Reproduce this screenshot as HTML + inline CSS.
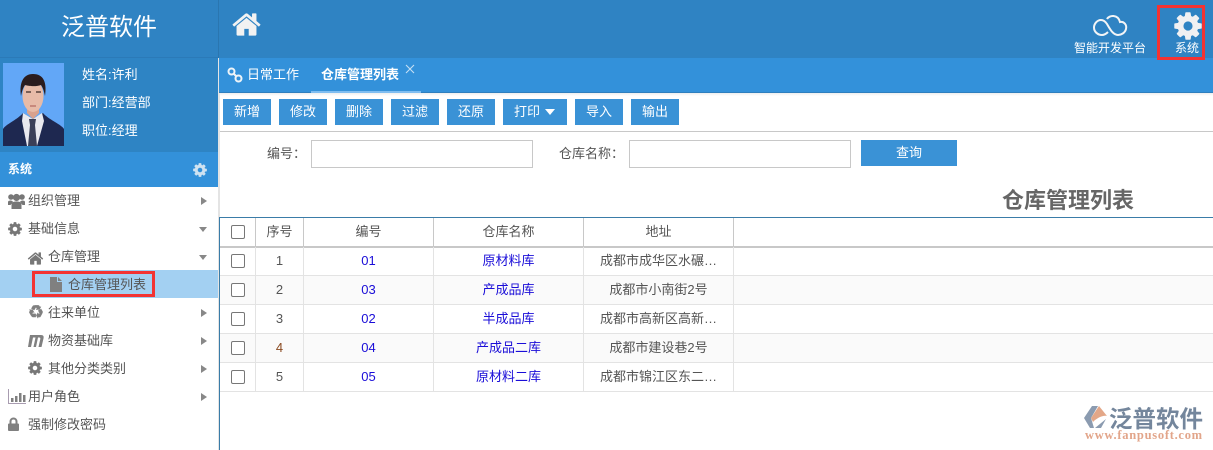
<!DOCTYPE html>
<html><head><meta charset="utf-8"><style>
*{box-sizing:border-box;margin:0;padding:0}
html,body{width:1213px;height:450px;overflow:hidden;background:#fff;font-family:"Liberation Sans","Noto Sans CJK SC",sans-serif;font-size:13px;color:#555}
.a{position:absolute;white-space:nowrap}
.btn{position:absolute;top:99px;height:26px;background:#3a92d6;color:#fff;text-align:center;line-height:25px;font-size:13px}
.m{position:absolute;white-space:nowrap;line-height:28px;height:28px;font-size:13px;color:#555}
.tri-r{position:absolute;width:0;height:0;border-left:6px solid #888;border-top:4px solid transparent;border-bottom:4px solid transparent;left:201px}
.tri-d{position:absolute;width:0;height:0;border-top:5px solid #888;border-left:4px solid transparent;border-right:4px solid transparent;left:199px}
svg{position:absolute;display:block}
.h{position:absolute;top:218px;height:28px;line-height:27px;text-align:center;font-size:13px;color:#555}
.c{position:absolute;height:28px;line-height:28px;text-align:center;font-size:13px;color:#555}
.l{color:#1a0dd8}
.v{position:absolute;width:1px}
.hl{position:absolute;left:220px;width:993px;height:1px;background:#e3e3e3}
.cb{position:absolute;left:231px;width:14px;height:14px;border:1px solid #777;border-radius:2px;background:#fff}
input{position:absolute;border:1px solid #c8c8c8;background:#fff}
</style></head><body>
<svg width="0" height="0"><defs>
<path id="gear" d="M1152 896q0-106-75-181t-181-75-181 75-75 181 75 181 181 75 181-75 75-181zm512-109v222q0 12-8 23t-20 13l-185 28q-19 54-39 91 35 50 107 138 10 12 10 25t-9 23q-27 37-99 108t-94 71q-12 0-26-9l-138-108q-44 23-91 38-16 136-29 186-7 28-36 28h-222q-14 0-24.5-8.5t-11.5-21.5l-28-184q-49-16-90-37l-141 107q-10 9-25 9-14 0-25-11-126-114-165-168-7-10-7-23 0-12 8-23 15-21 51-66.5t54-70.5q-27-50-41-99l-183-27q-13-2-21-12.5t-8-23.5v-222q0-12 8-23t19-13l186-28q14-46 39-92-40-57-107-138-10-12-10-24 0-10 9-23 26-36 98.5-107.5t94.5-71.5q13 0 26 10l138 107q44-23 91-38 16-136 29-186 7-28 36-28h222q14 0 24.5 8.5t11.5 21.5l28 184q49 16 90 37l142-107q9-9 24-9 13 0 25 10 129 119 165 170 7 8 7 22 0 12-8 23-15 21-51 66.5t-54 70.5q26 50 41 98l183 28q13 2 21 12.5t8 23.5z"/>
<path id="home" d="M1472 992v480q0 26-19 45t-45 19h-384v-384h-256v384h-384q-26 0-45-19t-19-45v-480q0-1 .5-3t.5-3l575-474 575 474q1 2 1 6zm223-69l-62 74q-8 9-21 11h-3q-13 0-21-7l-692-577-692 577q-12 8-24 7-13-2-21-11l-62-74q-8-10-7-23.5t11-21.5l719-599q32-26 76-26t76 26l244 204v-195q0-14 9-23t23-9h192q14 0 23 9t9 23v408l219 182q10 8 11 21.5t-7 23.5z"/>
</defs></svg>

<!-- header -->
<div class="a" style="left:0;top:0;width:1213px;height:58px;background:#2f83c3"></div>
<div class="a" style="left:218px;top:0;width:1px;height:58px;background:#2a76b0"></div>
<div class="a" style="left:0;top:57px;width:218px;height:1px;background:#2b7ab8"></div>
<svg style="left:231px;top:9px" width="31" height="31" viewBox="0 0 1792 1792" fill="#f2f2f2"><use href="#home"/></svg>
<div class="a" style="left:0;top:10px;width:218px;text-align:center;color:#fff;font-size:24px;line-height:36px">泛普软件</div>

<!-- sidebar top -->
<div class="a" style="left:0;top:58px;width:218px;height:94px;background:#2e84c4"></div>
<svg style="left:3px;top:63px" width="61" height="83" viewBox="0 0 61 83">
<rect width="61" height="83" fill="#62a7f7"/>
<path d="M0 83V66C3 61 14 57 20 50L30 56L40 50C46 57 58 61 61 66V83Z" fill="#1e2850"/>
<path d="M20 50L30 56L39 50L41 58L34 83H24L19 58Z" fill="#e9e9ef"/>
<path d="M26 56H33L32 62L34 83H25L27 62Z" fill="#3a3f58"/>
<path d="M24 42H36V50L30 56L24 50Z" fill="#d9a28e"/>
<ellipse cx="30" cy="33" rx="10.500" ry="16" fill="#e7bba8"/>
<path d="M18 33C16 20 20 11 30 11C41 11 44 20 42 33C41 28 40 25 38 22C33 24 25 23 22 22C20 25 19 28 18 33Z" fill="#2a1c1e"/>
<path d="M23 29h5M33 29h5" stroke="#3a2826" stroke-width="1.200"/>
<path d="M27 43h6" stroke="#b4685e" stroke-width="1.200"/>
</svg>
<div class="a" style="left:82px;top:66px;color:#fff;line-height:18px;font-size:13px">姓名:许利</div>
<div class="a" style="left:82px;top:94px;color:#fff;line-height:18px;font-size:13px">部门:经营部</div>
<div class="a" style="left:82px;top:122px;color:#fff;line-height:18px;font-size:13px">职位:经理</div>

<div class="a" style="left:0;top:152px;width:218px;height:35px;background:#3391da"></div>
<div class="a" style="left:8px;top:160px;color:#fff;font-weight:bold;font-size:12px;line-height:18px">系统</div>
<svg style="left:192px;top:162px" width="16" height="16" viewBox="0 0 1792 1792" fill="#cfe2f1"><use href="#gear"/></svg>

<!-- sidebar menu -->
<div class="a" style="left:0;top:270px;width:218px;height:28px;background:#a3d0f2"></div>
<div class="a" style="left:218px;top:58px;width:2px;height:392px;background:#e4e4e4"></div>

<svg style="left:8px;top:193px" width="17" height="16" viewBox="0 0 17 16" fill="#777"><circle cx="8.500" cy="4.500" r="3.600"/><circle cx="3" cy="4" r="2.800"/><circle cx="14" cy="4" r="2.800"/><path d="M3.500 16V11C3.500 9 6 8.500 8.500 8.500S13.500 9 13.500 11V16ZM0 12V9C0 8 1 7.500 3 7.500L5 8.500L2.500 12ZM17 12V9C17 8 16 7.500 14 7.500L12 8.500L14.500 12Z"/></svg>
<div class="m" style="left:28px;top:187px">组织管理</div><div class="tri-r" style="top:197px"></div>
<svg style="left:7px;top:221px" width="16" height="16" viewBox="0 0 1792 1792" fill="#777"><use href="#gear"/></svg>
<div class="m" style="left:28px;top:215px">基础信息</div><div class="tri-d" style="top:227px"></div>
<svg style="left:27px;top:250px" width="17" height="17" viewBox="0 0 1792 1792" fill="#777"><use href="#home"/></svg>
<div class="m" style="left:48px;top:243px">仓库管理</div><div class="tri-d" style="top:255px"></div>
<svg style="left:50px;top:277px" width="12" height="15" viewBox="0 0 12 15" fill="#808080"><path d="M0 0H7V5H12V15H0ZM8 0L12 4H8Z"/></svg>
<div class="m" style="left:68px;top:271px">仓库管理列表</div>
<div class="a" style="left:32px;top:271px;width:123px;height:26px;border:3px solid #f33333"></div>
<div class="a" style="left:28px;top:302px;font:18px/22px 'DejaVu Sans',sans-serif;color:#808080;-webkit-text-stroke:.6px #808080">♻</div>
<div class="m" style="left:48px;top:299px">往来单位</div><div class="tri-r" style="top:309px"></div>
<svg style="left:28px;top:335px" width="16" height="12" viewBox="0 0 16 12" fill="#808080"><path d="M2 0H13C15.500 0 16 1.500 15.500 3.500L13.500 12H10.500L12.300 4C12.500 3 12 2.500 11.300 2.500H10L8 12H5.500L7.500 2.500H5L3 12H0Z"/></svg>
<div class="m" style="left:48px;top:327px">物资基础库</div><div class="tri-r" style="top:337px"></div>
<svg style="left:27px;top:360px" width="16" height="16" viewBox="0 0 1792 1792" fill="#777"><use href="#gear"/></svg>
<div class="m" style="left:48px;top:355px">其他分类类别</div><div class="tri-r" style="top:365px"></div>
<svg style="left:8px;top:389px" width="18" height="15" viewBox="0 0 18 15"><path d="M.5 0V14.500H18" stroke="#a89cb0" fill="none"/><path d="M3 9h2.500v4H3zM7 7h2.500v6H7zM11 4h2.500v9H11zM15 6h2.500v7H15z" fill="#808080"/></svg>
<div class="m" style="left:28px;top:383px">用户角色</div><div class="tri-r" style="top:393px"></div>
<svg style="left:8px;top:417px" width="11" height="14" viewBox="0 0 11 14" fill="#808080"><path d="M1.500 7V4.500a4 4 0 0 1 8 0V7H7.500V4.500a2 2 0 0 0-4 0V7ZM1 6.500H10a1 1 0 0 1 1 1V13a1 1 0 0 1-1 1H1a1 1 0 0 1-1-1V7.500a1 1 0 0 1 1-1Z"/></svg>
<div class="m" style="left:28px;top:411px">强制修改密码</div>

<!-- tabs -->
<div class="a" style="left:219px;top:58px;width:994px;height:34px;background:#3391da"></div>
<div class="a" style="left:219px;top:92px;width:994px;height:1px;background:#2f7fbe"></div>
<div class="a" style="left:220px;top:93px;width:993px;height:3px;background:linear-gradient(#eee,#fff)"></div>
<svg style="left:227px;top:67px" width="16" height="16" viewBox="0 0 16 16" fill="none" stroke="#eef4f8" stroke-width="2"><circle cx="4.500" cy="4.500" r="3"/><circle cx="11.500" cy="11.500" r="3"/><path d="M6.500 6.500L9.500 9.500"/></svg>
<div class="a" style="left:247px;top:66px;color:#fff;font-size:13px;line-height:18px">日常工作</div>
<div class="a" style="left:321px;top:66px;color:#fff;font-size:13px;font-weight:bold;line-height:18px">仓库管理列表</div>
<svg style="left:405px;top:64px" width="10" height="10" viewBox="0 0 10 10" stroke="#c4dff3" stroke-width="1.100"><path d="M1 1L9 9M9 1L1 9"/></svg>
<div class="a" style="left:311px;top:91px;width:110px;height:2px;background:#7fbdf0"></div>

<!-- header right (above tab bar) -->
<svg style="left:1090px;top:10px" width="40" height="30" viewBox="0 0 40 30" fill="none" stroke="#f2f4f6" stroke-width="2"><path d="M17 9C19 5 28 4 30 12C34 11 37 15 36 19C35 23 31 25 28 25C23 25 20 19 17 14C15 11 13 10 11 10C7 10 4 14 4 17.500C4 22 8 25 12 25C14 25 16 24 18 22"/></svg>
<div class="a" style="left:1074px;top:40px;color:#fff;font-size:12px;line-height:16px">智能开发平台</div>
<svg style="left:1172px;top:10px" width="32" height="32" viewBox="0 0 1792 1792" fill="#f0f0f2"><use href="#gear"/></svg>
<div class="a" style="left:1175px;top:40px;color:#fff;font-size:12px;line-height:16px">系统</div>
<div class="a" style="left:1157px;top:5px;width:48px;height:55px;border:3px solid #f33333"></div>

<!-- toolbar -->
<div class="btn" style="left:223px;width:48px">新增</div>
<div class="btn" style="left:279px;width:48px">修改</div>
<div class="btn" style="left:335px;width:48px">删除</div>
<div class="btn" style="left:391px;width:48px">过滤</div>
<div class="btn" style="left:447px;width:48px">还原</div>
<div class="btn" style="left:503px;width:64px;text-align:left;padding-left:11px">打印</div>
<div class="a" style="left:545px;top:109px;width:0;height:0;border-top:6px solid #fff;border-left:5px solid transparent;border-right:5px solid transparent"></div>
<div class="btn" style="left:575px;width:48px">导入</div>
<div class="btn" style="left:631px;width:48px">输出</div>
<div class="a" style="left:220px;top:131px;width:993px;height:1px;background:#c8c8c8"></div>

<!-- search -->
<div class="a" style="left:267px;top:145px;font-size:13px;line-height:18px;color:#555">编号：</div>
<input style="left:311px;top:140px;width:222px;height:28px">
<div class="a" style="left:559px;top:145px;font-size:13px;line-height:18px;color:#555">仓库名称：</div>
<input style="left:629px;top:140px;width:222px;height:28px">
<div class="a" style="left:861px;top:140px;width:96px;height:26px;background:#3a92d6;color:#fff;text-align:center;line-height:25px">查询</div>
<div class="a" style="left:1002px;top:187px;font-size:22px;font-weight:bold;line-height:28px;color:#666">仓库管理列表</div>

<!-- table -->
<div class="a" style="left:219px;top:217px;width:994px;height:1px;background:#3a7ca8"></div>
<div class="a" style="left:219px;top:217px;width:1px;height:233px;background:#3a7ca8"></div>
<div class="a" style="left:220px;top:246px;width:993px;height:1.500px;background:#c8c8c8"></div>
<div class="a" style="left:220px;top:276px;width:993px;height:29px;background:#fafafa"></div>
<div class="a" style="left:220px;top:334px;width:993px;height:29px;background:#fafafa"></div>
<div class="hl" style="top:275px"></div><div class="hl" style="top:304px"></div><div class="hl" style="top:333px"></div><div class="hl" style="top:362px"></div><div class="hl" style="top:391px"></div>
<div class="v" style="left:255px;top:218px;height:28px;background:#c8c8c8"></div>
<div class="v" style="left:303px;top:218px;height:28px;background:#c8c8c8"></div>
<div class="v" style="left:433px;top:218px;height:28px;background:#c8c8c8"></div>
<div class="v" style="left:583px;top:218px;height:28px;background:#c8c8c8"></div>
<div class="v" style="left:733px;top:218px;height:28px;background:#c8c8c8"></div>
<div class="v" style="left:255px;top:247px;height:145px;background:#e3e3e3"></div>
<div class="v" style="left:303px;top:247px;height:145px;background:#e3e3e3"></div>
<div class="v" style="left:433px;top:247px;height:145px;background:#e3e3e3"></div>
<div class="v" style="left:583px;top:247px;height:145px;background:#e3e3e3"></div>
<div class="v" style="left:733px;top:247px;height:145px;background:#e3e3e3"></div>

<div class="cb" style="top:225px"></div><div class="cb" style="top:254px"></div><div class="cb" style="top:283px"></div><div class="cb" style="top:312px"></div><div class="cb" style="top:341px"></div><div class="cb" style="top:370px"></div>

<div class="h" style="left:256px;width:47px">序号</div>
<div class="h" style="left:304px;width:129px">编号</div>
<div class="h" style="left:434px;width:149px">仓库名称</div>
<div class="h" style="left:584px;width:149px">地址</div>

<div class="c" style="left:256px;width:47px;top:247px">1</div><div class="c l" style="left:304px;width:129px;top:247px">01</div><div class="c l" style="left:434px;width:149px;top:247px">原材料库</div><div class="c" style="left:584px;width:149px;top:247px">成都市成华区水碾…</div>
<div class="c" style="left:256px;width:47px;top:276px">2</div><div class="c l" style="left:304px;width:129px;top:276px">03</div><div class="c l" style="left:434px;width:149px;top:276px">产成品库</div><div class="c" style="left:584px;width:149px;top:276px">成都市小南街2号</div>
<div class="c" style="left:256px;width:47px;top:305px">3</div><div class="c l" style="left:304px;width:129px;top:305px">02</div><div class="c l" style="left:434px;width:149px;top:305px">半成品库</div><div class="c" style="left:584px;width:149px;top:305px">成都市高新区高新…</div>
<div class="c" style="left:256px;width:47px;top:334px;color:#8a4a20">4</div><div class="c l" style="left:304px;width:129px;top:334px">04</div><div class="c l" style="left:434px;width:149px;top:334px">产成品二库</div><div class="c" style="left:584px;width:149px;top:334px">成都市建设巷2号</div>
<div class="c" style="left:256px;width:47px;top:363px">5</div><div class="c l" style="left:304px;width:129px;top:363px">05</div><div class="c l" style="left:434px;width:149px;top:363px">原材料二库</div><div class="c" style="left:584px;width:149px;top:363px">成都市锦江区东二…</div>

<!-- logo -->
<svg style="left:1083px;top:405px" width="25" height="25" viewBox="0 0 25 25"><path d="M9 1H15L8 13L11 23H7L1 13Z" fill="#8b9bb0"/><path d="M16 1L24 11C20 10 14 13 10 17L8 13Z" fill="#e3a788"/><path d="M12 23L23 14L18 23Z" fill="#8b9bb0"/></svg>
<div class="a" style="left:1109px;top:406px;font-size:23.500px;font-weight:bold;line-height:26px;color:#74869c;filter:blur(.3px)">泛普软件</div>
<div class="a" style="left:1085px;top:428px;font:bold 12.500px/14px 'Liberation Serif',serif;letter-spacing:.72px;color:#e2a58a;filter:blur(.3px)">www.fanpusoft.com</div>
</body></html>
